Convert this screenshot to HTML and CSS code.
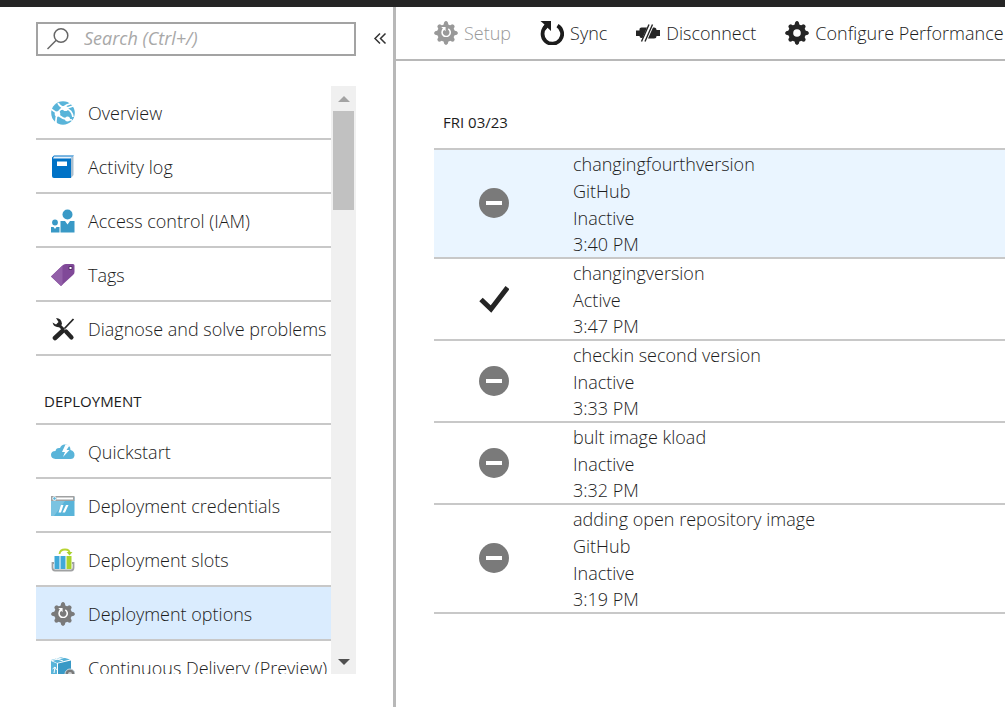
FILE: index.html
```html
<!DOCTYPE html>
<html lang="en">
<head>
<meta charset="utf-8">
<meta name="viewport" content="width=device-width, initial-scale=1">
<title>Deployment options</title>
<link rel="stylesheet" href="styles.css">
</head>
<body>
<svg class="defs" aria-hidden="true">
  <symbol id="gear" viewBox="0 0 24 24">
    <circle cx="12" cy="12" r="8.800"/>
    <path d="M9.2 5 10.2 1.200Q12-1 13.800 1.200L14.800 5ZM9.2 19 10.2 22.800Q12 25 13.800 22.800L14.800 19ZM5 9.200 1.200 10.200Q-1 12 1.200 13.800L5 14.800ZM19 9.200 22.800 10.200Q25 12 22.800 13.800L19 14.800Z"/>
    <path d="M9.2 5 10.2 1.500Q12-.2 13.800 1.500L14.800 5ZM9.2 19 10.2 22.500Q12 24.200 13.800 22.500L14.800 19ZM5 9.200 1.500 10.200Q-.2 12 1.500 13.800L5 14.800ZM19 9.200 22.500 10.200Q24.200 12 22.500 13.800L19 14.800Z" transform="rotate(45 12 12)"/>
  </symbol>
  <symbol id="turn" viewBox="0 0 24 24">
    <path d="M17.500 4.600A9.800 9.800 0 1 1 6 5.500" fill="none" stroke="currentColor" stroke-width="3.800"/>
    <path d="M.5 0H11V10L7.500 6.800 5 8.500 2.500 6.500 4.500 3.600Z" fill="currentColor"/>
  </symbol>
  <symbol id="inactive" viewBox="0 0 30 30">
    <circle cx="15" cy="15" r="15" fill="#7a7a7a"/>
    <path d="M7 13H23V17H7Z" fill="#fff"/>
  </symbol>
</svg>

<div class="app">
  <div class="topbar"></div>
  <div class="body">
    <aside class="sidebar">
      <div class="search-row">
        <label class="search">
          <svg class="search-icon" viewBox="0 0 24 24" aria-hidden="true"><g fill="none" stroke="#666" stroke-width="1.500"><circle cx="14" cy="8.500" r="6.800"/><path d="M9.200 13.300.5 22"/></g></svg>
          <input type="search" class="search-input" placeholder="Search (Ctrl+/)" aria-label="Search">
        </label>
        <button type="button" class="collapse" aria-label="Collapse menu">
          <svg viewBox="0 0 14 14" aria-hidden="true"><path d="M7 1.500 2 6.500 7 11.500M12.500 1.500 7.500 6.500 12.500 11.500" fill="none" stroke="#333" stroke-width="1.500"/></svg>
        </button>
      </div>
      <div class="scroll">
        <nav class="menu">
          <a class="item" href="#overview">
            <svg class="icon" viewBox="0 0 24 24" aria-hidden="true"><circle cx="12" cy="12" r="11.800" fill="#59b4d9"/><g stroke="#fff" fill="none" stroke-width="1.700"><path d="M7 2Q9 6 15 7.500T22 16M15 7.500 9 8.500M20 2.500Q11 5 6.500 12.500 4.500 17 5 22M0 8 6.500 12.500Q10 18.500 21 19M15 7.500 22 5"/></g><g fill="#fff"><circle cx="14.500" cy="7.500" r="2.600"/><circle cx="6.500" cy="13" r="2.800"/><circle cx="16.500" cy="18" r="2.500"/></g></svg>
            <span>Overview</span></a>
          <a class="item" href="#activity">
            <svg class="icon" viewBox="0 0 24 24" aria-hidden="true"><path d="M3 .5H23L20 3.500V23H3Q1 23 1 21V2.500Z" fill="#0072c6"/><path d="M3 1.500H22L19.500 3.500H2Z" fill="#e8f2fb"/><path d="M20 3.500 22.500 1V20L20 23Z" fill="#a9bfd0"/><path d="M6 6.500H16V11H6Z" fill="#fff"/></svg>
            <span>Activity log</span></a>
          <a class="item" href="#access">
            <svg class="icon" viewBox="0 0 24 24" aria-hidden="true"><g fill="#3999c6"><circle cx="16.500" cy="5.500" r="5"/><circle cx="4" cy="13.500" r="2.900"/><path d="M9.500 12H14L16.500 15.500 19 12H23.500V23.500H9.500ZM0 18H2.500L4 20 5.500 18H8.500V23.500H0Z"/></g></svg>
            <span>Access control (IAM)</span></a>
          <a class="item" href="#tags">
            <svg class="icon" viewBox="0 0 24 24" aria-hidden="true"><path d="M0 13.500 12 2Q13.500 1 15 1H22Q23.500 1 23.500 2.500V9Q23.500 11 22 12L10 23Z" fill="#804998"/><path d="M0 13.500 11.500 2.500V21.500L10 23Z" fill="#925fa8"/><path d="M18 3.500H21V6.500H18Z" fill="#fff" stroke="#58316b"/></svg>
            <span>Tags</span></a>
          <a class="item" href="#diagnose">
            <svg class="icon" viewBox="0 0 24 24" aria-hidden="true"><path d="M22.500 2 13.500 11.500" stroke="#252525" stroke-width="1.800"/><path d="M11.500 14 4 21" stroke="#252525" stroke-width="4.600" stroke-linecap="round"/><path d="M8.500 8.500 13 13" stroke="#252525" stroke-width="3"/><path d="M15 14.500 20.500 20.500" stroke="#252525" stroke-width="4.200" stroke-linecap="round"/><path d="M5 1Q10.500 1 11 7L9 10Q3 11 1.500 5.500L5 7.500 7.500 5Z" fill="#252525"/></svg>
            <span>Diagnose and solve problems</span></a>
          <h2 class="group">DEPLOYMENT</h2>
          <a class="item" href="#quickstart">
            <svg class="icon" viewBox="0 0 24 24" aria-hidden="true"><path d="M4.500 19Q0 18.500 0 14.800 0 11 4.500 11 5 7.500 9 8 10.500 4 14.500 4.500 19.500 5 19.500 10 23.800 11 23.500 15.500 23 19 19.500 19Z" fill="#59b4d9"/><path d="M14.500 4.500 11 12H14L12 17 18.500 10H15.500L18.500 5.500Z" fill="#fff"/></svg>
            <span>Quickstart</span></a>
          <a class="item" href="#credentials">
            <svg class="icon" viewBox="0 0 24 24" aria-hidden="true"><path d="M0 3H23.500V22H0Z" fill="#59b4d9"/><path d="M0 2H23.500V7H0Z" fill="#a0a1a2"/><path d="M6 3.500H22V5.500H6Z" fill="#fff"/><circle cx="3.500" cy="4.500" r="1.800" fill="#59b4d9" stroke="#fff"/><path d="M0 7H14L3 22H0Z" fill="#7bc3e1"/><path d="M10 11H12.500L10 18.500H7.500ZM15 11H17.500L14 18.500H11.500Z" fill="#fff"/></svg>
            <span>Deployment credentials</span></a>
          <a class="item" href="#slots">
            <svg class="icon" viewBox="0 0 24 24" aria-hidden="true"><path d="M3 15H1.500V19.500Q1.500 22.500 4 22.500H20Q22.500 22.500 22.500 19.500V15H21" fill="none" stroke="#a0a1a2" stroke-width="1.800"/><path d="M3.500 8H8.500V21H3.500ZM9.500 8H14.500V21H9.500Z" fill="#3fa9d8"/><path d="M15.500 8H20.500V21H15.500Z" fill="#a9d22d"/><path d="M8.500 6Q9 1.500 14 1.500T18.500 5.500" fill="none" stroke="#b8d432" stroke-width="1.800"/><path d="M15.500 4H21.500L18.500 7.500Z" fill="#a9d22d"/></svg>
            <span>Deployment slots</span></a>
          <a class="item item-selected" href="#options" aria-current="page">
            <svg class="icon" viewBox="0 0 24 24" fill="#7a7a7a" aria-hidden="true"><use href="#gear"/><use href="#turn" class="light" x="7" y="6" width="10" height="10"/></svg>
            <span>Deployment options</span></a>
          <a class="item" href="#delivery">
            <svg class="icon" viewBox="0 0 24 24" aria-hidden="true"><path d="M0 4 11 1 19 3.500 6 7Z" fill="#59b4d9"/><path d="M0 5 6 7.500V24L0 22Z" fill="#59b4d9"/><path d="M7 7.500 20 4.500V20L7 24Z" fill="#3999c6"/><path d="M5 2.500 12 5M1 4.500 17 .5" stroke="#fff"/><path d="M3 17 4 11 1.500 13M4 11 5.500 14" fill="none" stroke="#fff"/><circle cx="19" cy="18" r="5" fill="#7a7a7a" stroke="#c8dbe5"/><circle cx="19" cy="18" r="2" fill="#ccc"/></svg>
            <span>Continuous Delivery (Preview)</span></a>
        </nav>
        <div class="scrollbar">
          <button type="button" class="arrow" aria-label="Scroll up"><svg viewBox="0 0 12 6" aria-hidden="true"><path d="M6 0 12 6H0Z" fill="#a3a3a3"/></svg></button>
          <div class="thumb"></div>
          <button type="button" class="arrow arrow-down" aria-label="Scroll down"><svg viewBox="0 0 12 6" aria-hidden="true"><path d="M0 0H12L6 6Z" fill="#505050"/></svg></button>
        </div>
      </div>
    </aside>

    <main class="main">
      <div class="toolbar">
        <button type="button" class="tool" disabled>
          <svg class="icon" viewBox="0 0 24 24" fill="#999" aria-hidden="true"><use href="#gear"/><use href="#turn" class="light" x="7" y="6" width="10" height="10"/></svg>
          <span>Setup</span></button>
        <button type="button" class="tool">
          <svg class="icon" viewBox="0 0 24 24" aria-hidden="true"><use href="#turn"/></svg>
          <span>Sync</span></button>
        <button type="button" class="tool">
          <svg class="icon" viewBox="0 0 24 24" aria-hidden="true"><path d="M0 9.500H3.500V8Q3.500 6.500 5.500 6.500H11L6.500 17H5.500Q3.500 17 3.500 15H0ZM17 6.500H18Q20.500 6.500 20.500 9H24V15H20.500Q20.500 17.500 18 17.500H12Z" fill="#252525"/><path d="M13 3.500 5.500 20.500M16.500 3.500 9 20.500" stroke="#252525" stroke-width="1.400"/></svg>
          <span>Disconnect</span></button>
        <button type="button" class="tool">
          <svg class="icon" viewBox="0 0 24 24" fill="#252525" aria-hidden="true"><use href="#gear"/><circle cx="12" cy="12" r="3.800" fill="#fff"/></svg>
          <span>Configure Performance</span></button>
      </div>
      <section class="history">
        <h2 class="date" id="day">FRI 03/23</h2>
        <table class="deployments" aria-labelledby="day">
          <tbody>
            <tr class="row-hover">
              <td class="status"><svg viewBox="0 0 30 30" role="img" aria-label="Inactive"><use href="#inactive"/></svg></td>
              <td><p>changingfourthversion</p><p>GitHub</p><p>Inactive</p><p class="time">3:40 PM</p></td>
            </tr>
            <tr>
              <td class="status"><svg viewBox="0 0 30 30" role="img" aria-label="Active"><path d="M2 15.500 12 25 28.500 3.500" fill="none" stroke="#252525" stroke-width="5"/></svg></td>
              <td><p>changingversion</p><p>Active</p><p class="time">3:47 PM</p></td>
            </tr>
            <tr>
              <td class="status"><svg viewBox="0 0 30 30" role="img" aria-label="Inactive"><use href="#inactive"/></svg></td>
              <td><p>checkin second version</p><p>Inactive</p><p class="time">3:33 PM</p></td>
            </tr>
            <tr>
              <td class="status"><svg viewBox="0 0 30 30" role="img" aria-label="Inactive"><use href="#inactive"/></svg></td>
              <td><p>bult image kload</p><p>Inactive</p><p class="time">3:32 PM</p></td>
            </tr>
            <tr>
              <td class="status"><svg viewBox="0 0 30 30" role="img" aria-label="Inactive"><use href="#inactive"/></svg></td>
              <td><p>adding open repository image</p><p>GitHub</p><p>Inactive</p><p class="time">3:19 PM</p></td>
            </tr>
          </tbody>
        </table>
      </section>
    </main>
  </div>
</div>
</body>
</html>
```
FILE: styles.css
```css
* {
  box-sizing: border-box;
}

body {
  margin: 0;
  background: #fff;
  color: #1c1c1c;
  font: 300 18px/27px "Open Sans", "Noto Sans", sans-serif;
}

button {
  padding: 0;
  border: 0;
  background: none;
  color: inherit;
  font: inherit;
}

.defs {
  display: block;
  width: 0;
  height: 0;
}

.app {
  display: flex;
  flex-direction: column;
  height: 100vh;
  overflow: hidden;
}

.topbar {
  flex: none;
  height: 7px;
  background: #252525;
}

.body {
  display: flex;
  flex: 1;
  min-height: 0;
}

.sidebar {
  display: flex;
  flex: none;
  flex-direction: column;
  gap: 30px;
  width: 396px;
  padding: 15px 0 33px 36px;
  border-right: 3px solid #b8b8b8;
}

.search-row {
  display: flex;
  align-items: center;
  gap: 17px;
}

.search {
  display: flex;
  align-items: center;
  width: 320px;
  height: 34px;
  padding: 0 9px;
  border: 2px solid #a3a3a3;
}

.search-icon {
  flex: none;
  width: 24px;
  height: 24px;
}

.search-input {
  flex: 1;
  min-width: 0;
  margin-left: 13px;
  padding: 0 0 2px;
  border: 0;
  outline: 0;
  background: none;
  color: inherit;
  font: inherit;
}

.search-input::placeholder {
  color: #a8a8a8;
  font-style: italic;
  font-weight: 400;
  opacity: 1;
}

.collapse svg {
  display: block;
  width: 14px;
  height: 14px;
}

.scroll {
  display: flex;
  flex: 1;
  width: 320px;
  min-height: 0;
}

.menu {
  flex: 1;
  min-width: 0;
  overflow: hidden;
}

.item {
  display: flex;
  align-items: center;
  gap: 13px;
  height: 54px;
  padding: 2px 0 0 15px;
  border-bottom: 2px solid #c8c8c8;
  color: inherit;
  text-decoration: none;
  white-space: nowrap;
}

.item-selected {
  background: #daecfe;
}

.icon {
  flex: none;
  width: 24px;
  height: 24px;
}

.light {
  color: #fff;
}

.group {
  margin: 0;
  padding: 32px 8px 8px;
  border-bottom: 2px solid #c8c8c8;
  font-size: 15px;
  font-weight: 400;
}

.scrollbar {
  display: flex;
  flex-direction: column;
  width: 25px;
  padding: 0 2px;
  background: #f0f0f0;
}

.arrow {
  display: grid;
  place-items: center;
  height: 25px;
}

.arrow svg {
  width: 12px;
  height: 6px;
}

.arrow-down {
  margin-top: auto;
}

.thumb {
  height: 99px;
  background: #c1c1c1;
}

.main {
  flex: 1;
  min-width: 0;
  overflow: hidden;
}

.toolbar {
  display: flex;
  gap: 29px;
  height: 54px;
  padding-left: 38px;
  border-bottom: 2px solid #b8b8b8;
}

.tool {
  display: flex;
  flex: none;
  align-items: center;
  gap: 6px;
  white-space: nowrap;
}

.tool:disabled {
  color: #999;
}

.history {
  padding: 48px 0 0 38px;
}

.date {
  margin: 0;
  padding: 0 9px 12px;
  font-size: 15px;
  font-weight: 400;
}

.deployments {
  width: 100%;
  border-collapse: separate;
  border-spacing: 0;
  border-top: 2px solid #c8c8c8;
}

.deployments td {
  padding: 1px 0 0;
  border-bottom: 2px solid #c8c8c8;
}

.deployments .status {
  width: 139px;
  padding: 0 0 1px 45px;
}

.status svg {
  display: block;
  width: 30px;
  height: 30px;
}

.row-hover {
  background: #eaf5ff;
}

.deployments p {
  margin: 0;
}

.deployments .time {
  line-height: 25px;
}
```
